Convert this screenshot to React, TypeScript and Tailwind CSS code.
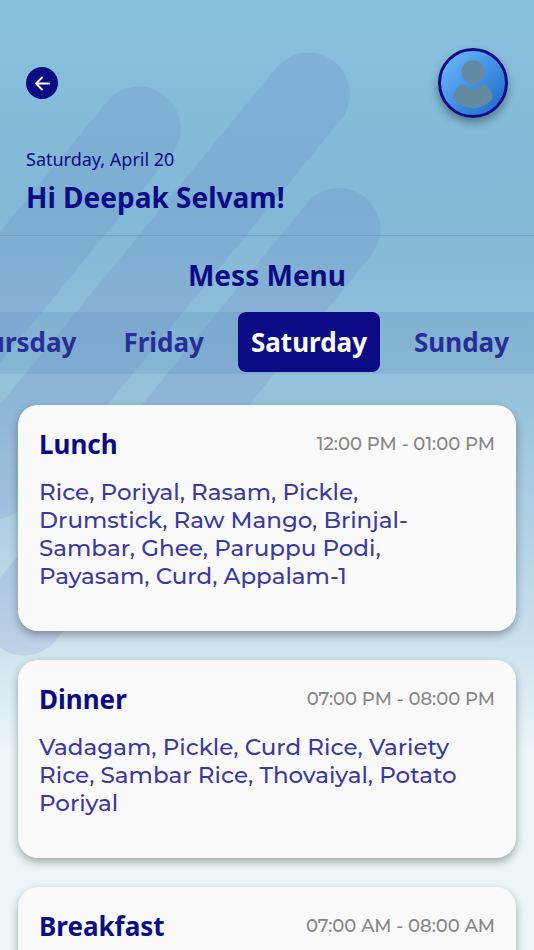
import React from "react";

type Meal = {
  name: string;
  time: string;
  items: string[];
};

const days = ["Thursday", "Friday", "Saturday", "Sunday"];

const meals: Meal[] = [
  {
    name: "Lunch",
    time: "12:00 PM - 01:00 PM",
    items: [
      "Rice, Poriyal, Rasam, Pickle,",
      "Drumstick, Raw Mango, Brinjal-",
      "Sambar, Ghee, Paruppu Podi,",
      "Payasam, Curd, Appalam-1",
    ],
  },
  {
    name: "Dinner",
    time: "07:00 PM - 08:00 PM",
    items: [
      "Vadagam, Pickle, Curd Rice, Variety",
      "Rice, Sambar Rice, Thovaiyal, Potato",
      "Poriyal",
    ],
  },
  { name: "Breakfast", time: "07:00 AM - 08:00 AM", items: [] },
];

const Backdrop = () => (
  <svg
    className="absolute top-0 left-0 -z-10"
    width="534"
    height="700"
    viewBox="0 0 534 700"
    fill="none"
    stroke="#5f73b9"
    strokeOpacity="0.15"
    strokeWidth="83"
    strokeLinecap="round"
    aria-hidden="true"
  >
    <path d="M139 128L-176 512" />
    <path d="M308.500 94L-6.500 478" />
    <path d="M339 229.500L24 614" />
  </svg>
);

const Avatar = () => (
  <button
    aria-label="Profile"
    className="size-[70px] overflow-hidden rounded-full border-[3px] border-[#0b0b86] bg-linear-to-br from-[#71bcff] to-[#0f68c8] shadow-[0_5px_9px_rgba(0,0,0,0.35)]"
  >
    <svg viewBox="0 0 64 64" className="size-full" fill="#638ba1" aria-hidden="true">
      <ellipse cx="32" cy="21" rx="11.5" ry="11.8" />
      <path d="M21 33.2Q32 40.500 43 33.2C48 35.500 51 41 52 46C52 48.500 44 57.200 32 57.200S12 48.500 12 46C13 41 16 35.500 21 33.2Z" />
    </svg>
  </button>
);

const MealCard = ({ meal }: { meal: Meal }) => (
  <article className="min-h-[198px] shrink-0 rounded-[20px] bg-[#fafafa] px-[21px] pt-[22px] pb-[41px] shadow-[0_4px_8px_rgba(0,0,0,0.32)]">
    <header className="flex items-center justify-between">
      <h3 className="text-[26px] leading-[34px] font-bold">{meal.name}</h3>
      <p className="font-['Montserrat','Inter',sans-serif] text-[18px] font-medium text-[#868686]">
        {meal.time}
      </p>
    </header>
    <p className="mt-[17px] font-['Montserrat','Inter',sans-serif] text-[23px] leading-7 font-medium whitespace-pre-line text-[#3a3a9e]">
      {meal.items.join("\n")}
    </p>
  </article>
);

const App = () => {
  return (
    <div className="relative isolate flex h-screen flex-col overflow-hidden bg-[linear-gradient(#87c0dd_0%,#83b8d7_22%,#8bbbd9_30%,#97c3dc_43%,#b5d4e5_58%,#cfe4ee_69%,#ebf6f8_79%)] font-['Noto_Sans',sans-serif] text-[#0b0b86]">
      <Backdrop />
      <header className="border-b border-[#6fa0c1] px-[26px] pt-12 pb-[21px]">
        <div className="flex items-center justify-between">
          <button aria-label="Back" className="flex size-8 items-center justify-center rounded-full bg-[#0b0b86]">
            <svg
              width="16"
              height="16"
              viewBox="0 0 16 16"
              fill="none"
              stroke="white"
              strokeWidth="1.9"
              strokeLinecap="round"
              strokeLinejoin="round"
              aria-hidden="true"
            >
              <path d="M15 8.500H2M8 2.500L2 8.500L8 14.500" />
            </svg>
          </button>
          <Avatar />
        </div>
        <p className="mt-7 text-[18px] leading-[26px]">Saturday, April 20</p>
        <h1 className="mt-2 text-[28px] leading-[34px] font-bold">Hi Deepak Selvam!</h1>
      </header>

      <h2 className="mt-5 text-center text-[28px] leading-[38px] font-bold">Mess Menu</h2>

      <nav className="mt-[18px] flex shrink-0 justify-end gap-[21px] overflow-hidden bg-[#4678af]/15 pr-3 pb-[2px]">
        {days.map((day) => (
          <button
            key={day}
            className={
              day === "Saturday"
                ? "shrink-0 rounded-lg bg-[#0b0b86] px-[13px] py-3 text-[26px] leading-9 font-bold text-white"
                : "shrink-0 px-[13px] py-3 text-[26px] leading-9 font-bold text-[#262f98]"
            }
          >
            {day}
          </button>
        ))}
      </nav>

      <main className="flex grow flex-col gap-[29px] overflow-hidden px-[18px] pt-[31px]">
        {meals.map((meal) => (
          <MealCard key={meal.name} meal={meal} />
        ))}
      </main>
    </div>
  );
};

export default App;
